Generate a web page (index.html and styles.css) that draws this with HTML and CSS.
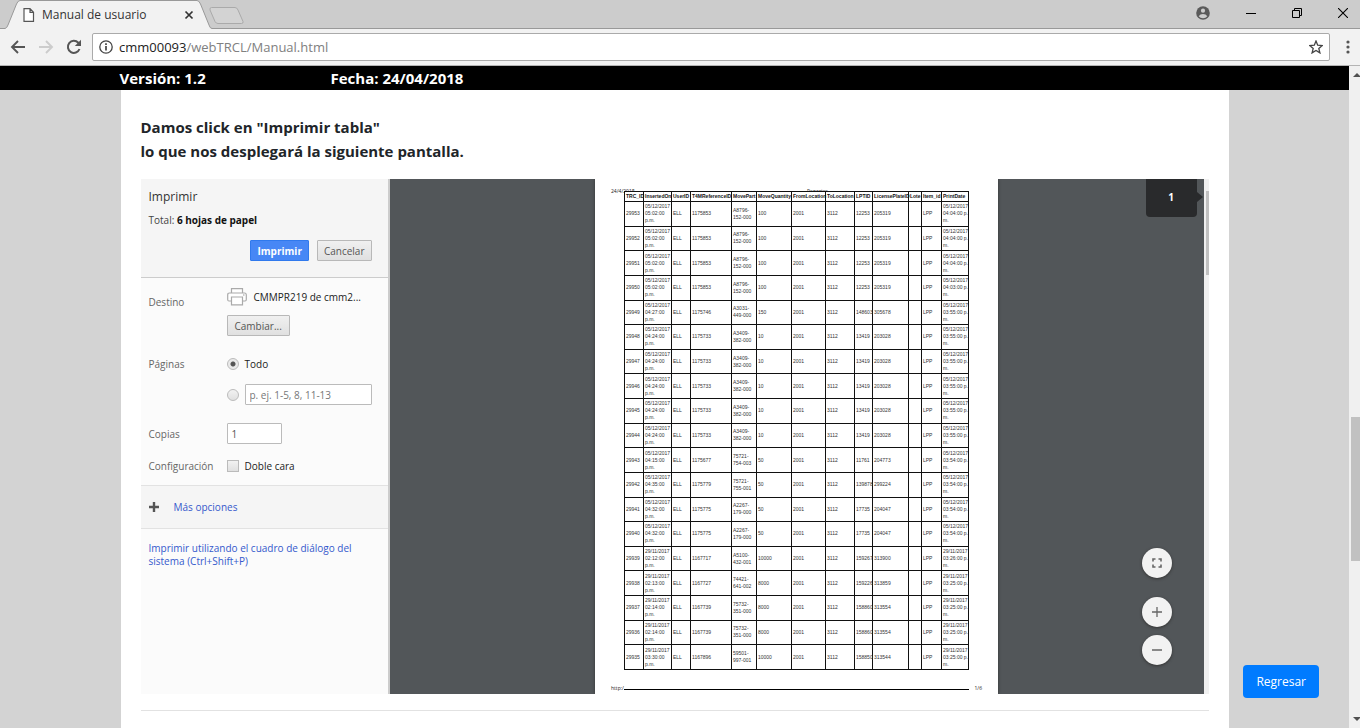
FILE: index.html
```html
<!DOCTYPE html>
<html lang="es">
<head>
<meta charset="utf-8">
<title>Manual de usuario</title>
<link rel="stylesheet" href="styles.css">
</head>
<body>
<header class="browser">
  <div class="tabstrip">
    <div class="tab">
      <svg class="tab-shape" width="212" height="29" viewBox="0 0 212 29"><path d="M0 28.5H5Q7 28 8 25L16.500 4Q18 .5 20 .5H197Q199 .5 200.500 4L209 25Q210 28.500 212 28.500V29H0Z" fill="#f2f2f2"/><path d="M0 28.500H5Q7 28 8 25L16.500 4Q18 .5 20 .5H197Q199 .5 200.500 4L209 25Q210 28.500 212 28.500" fill="none" stroke="#999"/></svg>
      <svg class="tab-file" width="12" height="14" viewBox="0 0 12 14"><path d="M1 .7H7L10.500 4.200V13.300H1ZM7 .7V4.300H10.500" fill="#fff" stroke="#555" stroke-width="1.200"/></svg>
      <span class="tab-title">Manual de usuario</span>
      <button class="plain" aria-label="Cerrar pestaña"><svg width="10" height="10" viewBox="0 0 10 10"><path d="M1.500 1.500L8.500 8.500M8.500 1.500L1.500 8.500" stroke="#333" stroke-width="1.700"/></svg></button>
    </div>
    <button class="plain new-tab" aria-label="Nueva pestaña"><svg width="36" height="18" viewBox="0 0 36 18"><path d="M2.500 .5H26Q28 .5 29 3L34 14.500Q34.500 16.500 32.500 16.500H9Q7 16.500 6 14.500L1 3Q.5 .5 2.500 .5Z" fill="#d3d3d3" stroke="#aaa"/></svg></button>
    <div class="window-controls">
      <button class="plain" aria-label="Perfil"><svg width="14" height="14" viewBox="0 0 14 14"><circle cx="7" cy="7" r="6.800" fill="#5a5a5a"/><circle cx="7" cy="4.700" r="2.100" fill="#ccc"/><path d="M2.700 10.200Q4 7.900 7 7.900T11.300 10.200Q9.700 12.300 7 12.300T2.700 10.200" fill="#ccc"/></svg></button>
      <button class="plain" aria-label="Minimizar"><svg width="10" height="12" viewBox="0 0 10 12"><path d="M0 6.500H10" stroke="#000"/></svg></button>
      <button class="plain" aria-label="Restaurar"><svg width="10" height="10" viewBox="0 0 10 10"><path d="M.5 2.500H7.500V9.500H.5ZM2.500 2.500V.5H9.500V7.500H7.500" fill="none" stroke="#000"/></svg></button>
      <button class="plain" aria-label="Cerrar"><svg width="10" height="10" viewBox="0 0 10 10"><path d="M0 0L10 10M10 0L0 10" stroke="#000" stroke-width="1.100"/></svg></button>
    </div>
  </div>
  <div class="toolbar">
    <button class="plain" aria-label="Atrás"><svg width="16" height="16" viewBox="0 0 16 16"><path d="M15 8H2.500M8 2L2 8L8 14" fill="none" stroke="#555" stroke-width="1.900"/></svg></button>
    <button class="plain" aria-label="Adelante"><svg width="16" height="16" viewBox="0 0 16 16"><path d="M1 8H13.500M8 2L14 8L8 14" fill="none" stroke="#ccc" stroke-width="1.900"/></svg></button>
    <button class="plain" aria-label="Recargar"><svg width="16" height="16" viewBox="0 0 16 16"><path d="M13.500 10A6 6 0 1 1 12.300 3.800L13.500 5" fill="none" stroke="#555" stroke-width="2"/><path d="M15 .8V7H8.800Z" fill="#555"/></svg></button>
    <div class="address">
      <svg width="14" height="14" viewBox="0 0 14 14"><circle cx="7" cy="7" r="6.200" fill="none" stroke="#444" stroke-width="1.300"/><path d="M7 6V10.500M7 3.300V5" stroke="#444" stroke-width="1.700"/></svg>
      <span class="url"><span class="host">cmm00093</span>/webTRCL/Manual.html</span>
      <button class="plain" aria-label="Añadir a marcadores"><svg width="14" height="14" viewBox="0 0 14 14"><path d="M7 1L8.700 5.200L13.200 5.500L9.800 8.500L10.900 12.900L7 10.500L3.100 12.900L4.200 8.500L.8 5.500L5.300 5.200Z" fill="none" stroke="#444" stroke-width="1.300"/></svg></button>
    </div>
    <button class="plain menu" aria-label="Menú"><svg width="4" height="14" viewBox="0 0 4 14" fill="#555"><circle cx="2" cy="2" r="1.600"/><circle cx="2" cy="7" r="1.600"/><circle cx="2" cy="12" r="1.600"/></svg></button>
  </div>
</header>
<div class="viewport">
  <div class="document">
    <div class="version-bar"><div class="version-inner"><span class="version">Versión: 1.2</span><span>Fecha: 24/04/2018</span></div></div>
    <main class="container">
      <h1 class="intro">Damos click en "Imprimir tabla"<br>lo que nos desplegará la siguiente pantalla.</h1>
      <section class="print-dialog">
        <form class="settings">
          <div class="settings-head">
            <h2 class="settings-title">Imprimir</h2>
            <p class="total">Total: <b>6 hojas de papel</b></p>
            <div class="actions"><button type="button" class="btn primary">Imprimir</button><button type="button" class="btn">Cancelar</button></div>
          </div>
          <div class="fields">
            <div class="field destination"><span class="label">Destino</span>
              <div class="field-body">
                <div class="printer"><svg width="20" height="18" viewBox="0 0 20 18"><path d="M4.500 5V.7H15.500V5M4.500 13H2Q.7 13 .7 11.500V7Q.7 5 2.500 5H17.500Q19.300 5 19.300 7V11.500Q19.300 13 18 13H15.500M4.500 9H15.500V16.800H4.500Z" fill="#fff" stroke="#aaa" stroke-width="1.200"/><path d="M16 7H17.500" stroke="#999"/></svg><span>CMMPR219 de cmm2...</span></div>
                <button type="button" class="btn change">Cambiar...</button>
              </div>
            </div>
            <div class="field pages"><span class="label">Páginas</span>
              <div class="field-body">
                <label class="option"><input class="radio" type="radio" name="pages" checked>Todo</label>
                <div class="option range"><input class="radio" type="radio" name="pages" aria-label="Intervalo"><input class="text range-text" type="text" placeholder="p. ej. 1-5, 8, 11-13" aria-label="Intervalo de páginas"></div>
              </div>
            </div>
            <div class="field copies"><label class="label" for="copies">Copias</label><input class="text copies-text" id="copies" type="text" value="1"></div>
            <div class="field"><span class="label">Configuración</span><label class="option"><input class="check" type="checkbox">Doble cara</label></div>
          </div>
          <div class="more"><svg width="10" height="10" viewBox="0 0 10 10"><path d="M5 0V10M0 5H10" stroke="#555" stroke-width="2.400"/></svg><a class="link" href="#">Más opciones</a></div>
          <a class="link system" href="#">Imprimir utilizando el cuadro de diálogo del sistema (Ctrl+Shift+P)</a>
        </form>
        <div class="preview">
          <div class="paper">
            <div class="paper-head"><span>24/4/2018</span><span>Reportes</span></div>
            <table class="report">
              <thead><tr><th class="w19">TRC_ID</th><th class="w28">InsertedOn</th><th class="w19">UserID</th><th class="w41">T4MReferenceID</th><th class="w25">MovePart</th><th class="w35">MoveQuantity</th><th class="w34">FromLocation</th><th class="w29">ToLocation</th><th class="w18">LPTID</th><th class="w36">LicensePlateID</th><th class="w13">Lote</th><th class="w20">Item_id</th><th class="w27">PrintDate</th></tr></thead>
              <tbody id="rows"></tbody>
            </table>
            <div class="paper-foot"><span>http:/</span><span class="rule"></span><span class="page-count">1/6</span></div>
          </div>
          <div class="page-badge">1</div>
          <div class="zoom-controls">
            <button class="round fit" aria-label="Ajustar a la página"><svg width="12" height="12" viewBox="0 0 12 12"><path d="M2 4.500V2H4.500M7.500 2H10V4.500M10 7.500V10H7.500M4.500 10H2V7.500" fill="none" stroke="#666" stroke-width="1.600"/></svg></button>
            <button class="round" aria-label="Acercar"><svg width="12" height="12" viewBox="0 0 12 12"><path d="M6 1V11M1 6H11" stroke="#666" stroke-width="1.300"/></svg></button>
            <button class="round" aria-label="Alejar"><svg width="12" height="12" viewBox="0 0 12 12"><path d="M1 6H11" stroke="#666" stroke-width="1.500"/></svg></button>
          </div>
        </div>
        <div class="preview-scroll"><div class="preview-thumb"></div></div>
      </section>
      <hr class="divider">
    </main>
  </div>
  <div class="scrollbar">
    <svg width="9" height="18" viewBox="0 0 9 18"><path d="M2 11L6 7L10 11Z" fill="#505050"/></svg>
    <div class="track"><div class="thumb"></div></div>
    <svg width="9" height="18" viewBox="0 0 9 18"><path d="M2 7L6 11L10 7Z" fill="#505050"/></svg>
  </div>
</div>
<button class="back">Regresar</button>
<script src="report.js"></script>
</body>
</html>
```
FILE: styles.css
```css
* { box-sizing: border-box; }
body { margin: 0; height: 100vh; display: flex; flex-direction: column; overflow: hidden; font-family: "Open Sans", "Noto Sans", sans-serif; color: #212529; }
button, input { font-family: inherit; }
h1, h2, p { margin: 0; }
svg { display: block; flex: none; }
.plain { border: 0; padding: 0; background: none; }

.browser { flex: none; background: #f2f2f2; border-bottom: 1px solid #b4b4b4; }
.tabstrip { display: flex; height: 29px; background: #ccc; border-bottom: 1px solid #999; }
.tab { position: relative; display: flex; align-items: center; width: 212px; height: 29px; padding: 0 18px 0 23px; }
.tab-shape { position: absolute; left: 0; top: 0; }
.tab-file, .tab .plain { position: relative; }
.tab-title { position: relative; flex: 1; margin-left: 7px; font-size: 12px; color: #333; }
.new-tab { align-self: flex-start; margin: 7px 0 0 -3px; }
.window-controls { display: flex; align-items: center; gap: 36px; margin: 0 12px 2px auto; }
.toolbar { display: flex; align-items: center; gap: 12px; height: 36px; padding: 0 10px; }
.address { flex: 1; display: flex; align-items: center; gap: 6px; height: 28px; padding: 0 6px; border: 1px solid #aaa; border-radius: 2px; background: #fff; }
.toolbar .address { margin: 0 4px 0 -2px; }
.url { flex: 1; font-size: 13px; color: #808080; }
.host { color: #222; }

.viewport { flex: 1; display: flex; min-height: 0; }
.document { flex: 1; display: flex; flex-direction: column; overflow: hidden; background: #d3d3d3; }
.version-bar { background: #000; color: #fff; font-size: 15px; font-weight: 700; line-height: 24px; }
.version-inner { display: flex; max-width: 1110px; margin: 0 auto; }
.version { width: 211px; }
.container { flex: 1; width: 100%; max-width: 1108px; margin: 0 auto; padding: 25px 20px 0; background: #fff; }
.intro { font-size: 15px; font-weight: 700; line-height: 24px; }
.print-dialog { display: grid; grid-template-columns: 249px 1fr 5px; margin-top: 16px; font-size: 10px; }
.divider { margin: 16px 0; border: 0; border-top: 1px solid #e2e2e2; }

.settings { border-right: 2px solid #ccc; background: #fbfbfb; }
.settings-head { padding: 9px 16px 16px 8px; background: #f5f5f5; border-bottom: 1px solid #ccc; }
.settings-title { font-size: 12px; font-weight: 400; line-height: 18px; color: #333; }
.total { margin-top: 6px; line-height: 16px; color: #444; }
.total b { color: #111; }
.actions { display: flex; justify-content: flex-end; gap: 8px; margin-top: 12px; }
.btn { height: 21px; padding: 0 6px; border: 1px solid #b8b8b8; border-radius: 1px; background: linear-gradient(#f0f0f0, #e0e0e0); color: #555; font-size: 10px; line-height: 16px; }
.change { padding: 0 7px; }
.primary { border-color: #3079ed; background: #4787f5; color: #fff; font-weight: 700; }
.fields { padding: 9px 16px 12px 8px; }
.field { display: flex; align-items: center; color: #222; }
.label { flex: none; width: 78px; color: #666; line-height: 14px; }
.field-body { flex: 1; min-width: 0; }
.destination { align-items: flex-start; }
.destination .label { margin-top: 8px; }
.printer { display: flex; align-items: center; gap: 7px; height: 20px; margin-bottom: 8px; white-space: nowrap; }
.pages { align-items: flex-start; margin-top: 21px; }
.option { display: flex; align-items: center; gap: 6px; line-height: 14px; }
.range { margin-top: 13px; }
.radio, .check { appearance: none; flex: none; width: 12px; height: 12px; margin: 0; border: 1px solid #bbb; background: linear-gradient(#f2f2f2, #e0e0e0); }
.radio { border-radius: 6px; }
.radio:checked { background: radial-gradient(circle, #555 2px, #eaeaea 3px); }
.text { height: 21px; padding: 0 4px; border: 1px solid #bbb; border-radius: 1px; background: #fff; font-size: 10px; color: #555; }
.range-text { flex: 1; min-width: 0; }
.range-text::placeholder { color: #777; }
.copies { margin: 18px 0 15px; }
.copies-text { width: 55px; }
.more { display: flex; align-items: center; gap: 15px; height: 44px; padding: 0 8px; border: solid #e2e2e2; border-width: 1px 0; background: #f5f5f5; }
.link { color: #3559cc; text-decoration: none; }
.system { display: block; padding: 13px 24px 0 8px; line-height: 13px; }

.preview { position: relative; display: flex; justify-content: center; overflow: hidden; background: #525659; }
.paper { width: 403px; padding: 8px 16px 2px; background: #fff; box-shadow: 0 0 3px #333; font: 5px/8px "Open Sans", sans-serif; color: #222; }
.paper-head { display: grid; grid-template-columns: 196px 1fr; height: 4px; }
.report { position: relative; width: 345px; height: 479px; margin-left: 13px; border-collapse: collapse; table-layout: fixed; background: #fff; font: 5px/7px "Liberation Sans", sans-serif; color: #333; }
.report th, .report td { padding: 0 0 0 1px; border: 1px solid #111; text-align: left; white-space: nowrap; }
.report th { height: 10px; color: #111; }
.w13 { width: 13px; }
.w18 { width: 18px; }
.w19 { width: 19px; }
.w20 { width: 20px; }
.w25 { width: 25px; }
.w27 { width: 27px; }
.w28 { width: 28px; }
.w29 { width: 29px; }
.w34 { width: 34px; }
.w35 { width: 35px; }
.w36 { width: 36px; }
.w41 { width: 41px; }
.paper-foot { display: flex; align-items: center; margin-top: 14px; }
.rule { flex: 1; height: 1px; margin-top: 2px; background: #000; }
.page-count { margin-left: 5px; }
.page-badge { position: absolute; right: 7px; top: 0; width: 51px; height: 38px; border-radius: 0 0 4px 4px; background: #292a2c; color: #fff; font-weight: 700; line-height: 36px; text-align: center; }
.page-badge::after { content: ""; position: absolute; left: 51px; top: 13px; border: solid transparent; border-width: 5px 0 5px 6px; border-left-color: #292a2c; }
.zoom-controls { position: absolute; right: 32px; bottom: 29px; display: grid; gap: 8px; }
.round { display: grid; place-items: center; width: 30px; height: 30px; padding: 0; border: 0; border-radius: 15px; background: #f2f2f2; box-shadow: 0 1px 3px #333; }
.fit { margin-bottom: 11px; }
.preview-scroll { padding: 12px 0 0 2px; background: #f0f0f0; }
.preview-thumb { height: 84px; background: #c1c1c1; }

.scrollbar { display: flex; flex-direction: column; width: 11px; padding-left: 2px; background: #f0f0f0; }
.track { flex: 1; padding-top: 333px; }
.thumb { height: 144px; background: #c1c1c1; }
.back { position: fixed; right: 41px; bottom: 30px; height: 33px; padding: 0 13px; border: 0; border-radius: 4px; background: #007bff; color: #fff; font-size: 12px; }
```
FILE: report.js
```js
const rows = [
  ["29953", "05/12/2017 05:02:00", "1175853", "A8796- 152-000", "100", "12253", "205319", "05/12/2017 04:04:00"],
  ["29952", "05/12/2017 05:02:00", "1175853", "A8796- 152-000", "100", "12253", "205319", "05/12/2017 04:04:00"],
  ["29951", "05/12/2017 05:02:00", "1175853", "A8796- 152-000", "100", "12253", "205319", "05/12/2017 04:04:00"],
  ["29950", "05/12/2017 05:02:00", "1175853", "A8796- 152-000", "100", "12253", "205319", "05/12/2017 04:03:00"],
  ["29949", "05/12/2017 04:27:00", "1175746", "A3031- 449-000", "150", "148603", "305678", "05/12/2017 03:55:00"],
  ["29948", "05/12/2017 04:24:00", "1175733", "A3409- 382-000", "10", "13419", "203028", "05/12/2017 03:55:00"],
  ["29947", "05/12/2017 04:24:00", "1175733", "A3409- 382-000", "10", "13419", "203028", "05/12/2017 03:55:00"],
  ["29946", "05/12/2017 04:24:00", "1175733", "A3409- 382-000", "10", "13419", "203028", "05/12/2017 03:55:00"],
  ["29945", "05/12/2017 04:24:00", "1175733", "A3409- 382-000", "10", "13419", "203028", "05/12/2017 03:55:00"],
  ["29944", "05/12/2017 04:24:00", "1175733", "A3409- 382-000", "10", "13419", "203028", "05/12/2017 03:55:00"],
  ["29943", "05/12/2017 04:15:00", "1175677", "75721- 754-003", "50", "11761", "204773", "05/12/2017 03:54:00"],
  ["29942", "05/12/2017 04:35:00", "1175779", "75721- 755-001", "50", "139878", "299224", "05/12/2017 03:54:00"],
  ["29941", "05/12/2017 04:32:00", "1175775", "A2267- 179-000", "50", "17735", "204047", "05/12/2017 03:54:00"],
  ["29940", "05/12/2017 04:32:00", "1175775", "A2267- 179-000", "50", "17735", "204047", "05/12/2017 03:54:00"],
  ["29939", "29/11/2017 02:12:00", "1167717", "A5100- 432-001", "10000", "159267", "313900", "29/11/2017 03:26:00"],
  ["29938", "29/11/2017 02:13:00", "1167727", "74421- 641-002", "8000", "159226", "313859", "29/11/2017 03:25:00"],
  ["29937", "29/11/2017 02:14:00", "1167739", "75732- 351-000", "8000", "158860", "313554", "29/11/2017 03:25:00"],
  ["29936", "29/11/2017 02:14:00", "1167739", "75732- 351-000", "8000", "158860", "313554", "29/11/2017 03:25:00"],
  ["29935", "29/11/2017 03:30:00", "1167896", "59501- 997-001", "10000", "158850", "313544", "29/11/2017 03:25:00"]
];

document.getElementById("rows").innerHTML = rows.map(([id, inserted, reference, part, quantity, lpt, plate, printed]) => {
  const cells = [id, inserted.replace(" ", "<br>") + "<br>p.m.", "ELL", reference, part.replace(" ", "<br>"), quantity, "2001", "3112", lpt, plate, "", "LPP", printed.replace(" ", "<br>") + " p.<br>m."];
  return "<tr>" + cells.map(cell => `<td>${cell}</td>`).join("") + "</tr>";
}).join("");
```
